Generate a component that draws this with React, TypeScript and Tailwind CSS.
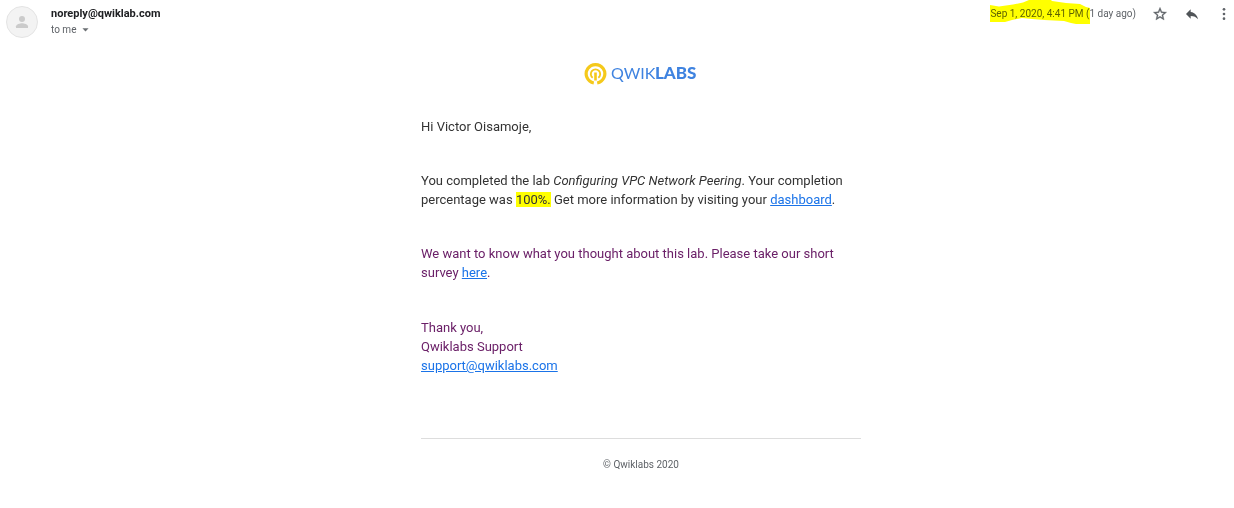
import React from "react";

function Logo() {
  return (
    <div role="img" aria-label="Qwiklabs" className="flex justify-center">
      <svg width="114" height="24" viewBox="0 0 114 24" className="block">
        <g fill="none" stroke="#f5c91b">
          <path d="M9.800 22A9.300 9.300 0 1 1 13.200 22" strokeWidth="3.200" />
          <path d="M8.700 16.800A4.700 4.700 0 1 1 14.300 16.800" strokeWidth="1.900" />
          <path d="M11.500 11.500v8" strokeWidth="2.600" />
        </g>
        <g fill="#3f83e0" fontFamily="Lato, sans-serif">
          <text x="27" y="18" fontSize="16">QWIK</text>
          <text x="71" y="18" fontSize="17" fontWeight="900">LABS</text>
        </g>
      </svg>
    </div>
  );
}

function MessageHeader() {
  return (
    <header className="flex items-start justify-between pt-1 pr-0.5 pl-1.5">
      <div className="flex gap-[13px]">
        <div className="mt-0.5 size-8 shrink-0 overflow-hidden rounded-full border border-[#e4e4e4] bg-[#f3f3f3]">
          <svg viewBox="0 0 30 30" className="block size-full" fill="#cbcbcb">
            <circle cx="15" cy="12" r="3" />
            <path d="M9 21v-1.700c0-2 4-3.100 6-3.100s6 1.100 6 3.100V21z" />
          </svg>
        </div>
        <div className="pt-0.5">
          <h1 className="text-[11px] leading-4 font-bold text-[#202124]">noreply@qwiklab.com</h1>
          <button type="button" className="flex items-center gap-1.5 text-[10px] leading-4 text-[#5f6368]">
            to me
            <svg width="7" height="4" viewBox="0 0 8 4" fill="#6b6f73">
              <path d="M0.500 0h7L4 3.800z" />
            </svg>
          </button>
        </div>
      </div>
      <div className="flex h-5 items-center text-[#5f6368]">
        <div className="relative mr-4 text-[10px] leading-4">
          <svg width="100" height="26" viewBox="0 0 100 26" className="absolute -top-1.5 left-0" fill="#ffff00">
            <path d="M0 5l9 1.500 14-2 10-2 6-2.500h22l1 1 14 2 14 1 6 3 4 1v16H86l-5-1-7-2-20-1-12-1-10-1-10 2-7 2H0z" />
          </svg>
          <time className="relative mix-blend-multiply">Sep 1, 2020, 4:41 PM (1 day ago)</time>
        </div>
        <button type="button" aria-label="Star" className="mr-4">
          <svg width="16" height="16" viewBox="0 0 24 24" fill="currentColor" stroke="currentColor" strokeWidth="0.500">
            <path d="M22 9.240l-7.190-.62L12 2 9.190 8.630 2 9.240l5.460 4.730L5.820 21 12 17.270 18.180 21l-1.630-7.030L22 9.240zM12 15.400l-3.760 2.270 1-4.280-3.320-2.880 4.380-.38L12 6.100l1.710 4.040 4.380.38-3.320 2.880 1 4.280L12 15.400z" />
          </svg>
        </button>
        <button type="button" aria-label="Reply" className="mr-4">
          <svg width="16" height="16" viewBox="0 0 24 24" fill="#505458">
            <path d="M10 9V5l-7 7 7 7v-4.100c5 0 8.500 1.600 11 5.100-1-5-4-10-11-11z" />
          </svg>
        </button>
        <button type="button" aria-label="More">
          <svg width="16" height="16" viewBox="0 0 24 24" fill="currentColor">
            <circle cx="12" cy="5" r="2" />
            <circle cx="12" cy="12" r="2" />
            <circle cx="12" cy="19" r="2" />
          </svg>
        </button>
      </div>
    </header>
  );
}

export default function App() {
  return (
    <main className="min-h-screen bg-white font-['Roboto',sans-serif]">
      <MessageHeader />
      <div className="pt-[23px] pl-12">
        <article className="mx-auto max-w-[440px] text-[13px] leading-[19px] text-[#333333]">
          <Logo />
          <p className="mt-8">Hi Victor Oisamoje,</p>
          <p className="mt-[35px]">
            You completed the lab <em>Configuring VPC Network Peering</em>. Your completion percentage was{" "}
            <mark className="bg-[#ffff00] text-inherit">100%.</mark> Get more information by visiting your{" "}
            <a href="#dashboard" className="text-[#1a73e8] underline">dashboard</a>.
          </p>
          <p className="mt-[35px] text-[#6b2068]">
            We want to know what you thought about this lab. Please take our short survey{" "}
            <a href="#survey" className="text-[#1a73e8] underline">here</a>.
          </p>
          <p className="mt-9 text-[#6b2068]">
            Thank you,
            <br />
            Qwiklabs Support
            <br />
            <a href="mailto:support@qwiklabs.com" className="text-[#1a73e8] underline">support@qwiklabs.com</a>
          </p>
          <footer className="mt-[63px] border-t border-[#dddddd] pt-[18px] text-center text-[10px] leading-4 text-[#5f6368]">
            © Qwiklabs 2020
          </footer>
        </article>
      </div>
    </main>
  );
}
